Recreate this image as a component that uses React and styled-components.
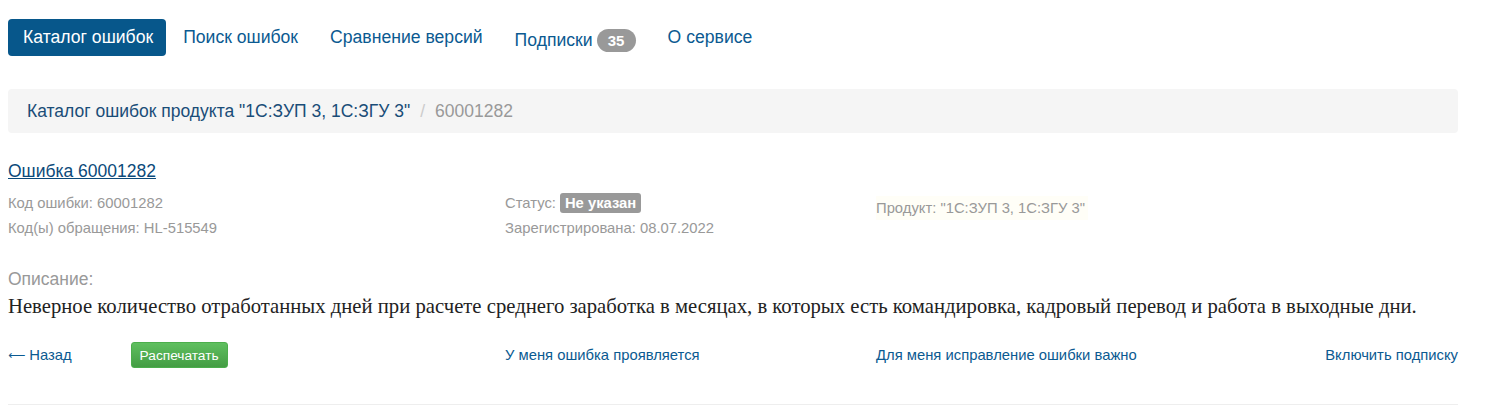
import React from "react";
import styled, { createGlobalStyle } from "styled-components";

const GlobalStyle = createGlobalStyle`
  body {
    margin: 0;
    background: #fff;
    font-family: "Liberation Sans", Arial, sans-serif;
    color: #333;
  }
  * { box-sizing: border-box; }
`;

const tabs = [
  { title: "Каталог ошибок", active: true },
  { title: "Поиск ошибок" },
  { title: "Сравнение версий" },
  { title: "Подписки", badge: 35 },
  { title: "О сервисе" },
];

const App = () => {
  return (
    <>
      <GlobalStyle />
      <Page>
        <Nav>
          {tabs.map((t) => (
            <Tab key={t.title} $active={t.active} $badge={!!t.badge}>
              {t.title}
              {t.badge && <Badge>{t.badge}</Badge>}
            </Tab>
          ))}
        </Nav>

        <Breadcrumb>
          <Crumb>Каталог ошибок продукта "1С:ЗУП 3, 1С:ЗГУ 3"</Crumb>
          <Sep>/</Sep>
          <Current>60001282</Current>
        </Breadcrumb>

        <ErrorTitle>Ошибка 60001282</ErrorTitle>

        <Info>
          <Col>
            <Field>Код ошибки: 60001282</Field>
            <Field>Код(ы) обращения: HL-515549</Field>
          </Col>
          <Col>
            <Field>
              Статус: <Label>Не указан</Label>
            </Field>
            <Field>Зарегистрирована: 08.07.2022</Field>
          </Col>
          <Col>
            <Product>Продукт: "1С:ЗУП 3, 1С:ЗГУ 3"</Product>
          </Col>
        </Info>

        <DescCaption>Описание:</DescCaption>
        <Description>
          Неверное количество отработанных дней при расчете среднего заработка в
          месяцах, в которых есть командировка, кадровый перевод и работа в
          выходные дни.
        </Description>

        <Actions>
          <ActionCell>
            <Link>
              <Arrow>⟵</Arrow>Назад
            </Link>
            <PrintBtn>Распечатать</PrintBtn>
          </ActionCell>
          <ActionCell>
            <Link>У меня ошибка проявляется</Link>
          </ActionCell>
          <ActionCell>
            <Link>Для меня исправление ошибки важно</Link>
            <Link>Включить подписку</Link>
          </ActionCell>
        </Actions>

        <Divider />
      </Page>
    </>
  );
};

const Page = styled.div`
  width: 1450px;
  margin-left: 8px;
  padding-top: 19px;
`;

const Nav = styled.ul`
  display: flex;
  align-items: center;
  margin: 0;
  padding: 0;
  list-style: none;
  gap: 2px;
`;

const Tab = styled.li`
  display: flex;
  align-items: center;
  height: 37px;
  padding: ${({ $active }) => ($active ? "0 13px 0 15px" : "0 15px")};
  padding-top: ${({ $badge }) => ($badge ? "5px" : "0")};
  border-radius: 4px;
  font-size: 17.6px;
  color: ${({ $active }) => ($active ? "#fff" : "#0b5a91")};
  background: ${({ $active }) => ($active ? "#07578b" : "transparent")};
  cursor: pointer;
`;

const Badge = styled.span`
  display: inline-flex;
  align-items: center;
  justify-content: center;
  height: 23px;
  min-width: 39px;
  margin-left: 4px;
  padding: 0 8px;
  border-radius: 12px;
  background: #999;
  color: #fff;
  font-size: 15px;
  font-weight: 700;
`;

const Breadcrumb = styled.div`
  display: flex;
  align-items: center;
  height: 44px;
  margin-top: 33px;
  padding: 0 19px;
  background: #f5f5f5;
  border-radius: 4px;
  font-size: 17.5px;
`;

const Crumb = styled.span`
  color: #1a4d78;
`;

const Sep = styled.span`
  padding: 0 10px;
  color: #ccc;
`;

const Current = styled.span`
  color: #999;
`;

const ErrorTitle = styled.a`
  display: inline-block;
  margin-top: 28px;
  font-size: 17.5px;
  line-height: 20px;
  color: #0b4a7a;
  text-decoration: underline;
`;

const Info = styled.div`
  display: grid;
  grid-template-columns: 497px 371px 1fr;
  margin-top: 12px;
`;

const Col = styled.div`
  display: flex;
  flex-direction: column;
  gap: 5px;
`;

const Field = styled.div`
  display: flex;
  align-items: center;
  height: 20px;
  font-size: 14.8px;
  color: #999;
  gap: 4px;
`;

const Label = styled.span`
  display: inline-flex;
  align-items: center;
  height: 20px;
  padding: 0 5px;
  border-radius: 3px;
  background: #999;
  color: #fff;
  font-weight: 700;
  font-size: 14.8px;
`;

const Product = styled.div`
  display: inline-flex;
  align-self: flex-start;
  align-items: center;
  height: 24px;
  margin-top: 3px;
  padding-right: 3px;
  background: #fffef7;
  font-size: 14.8px;
  color: #999;
`;

const DescCaption = styled.div`
  margin-top: 31px;
  font-size: 17.5px;
  line-height: 20px;
  color: #999;
`;

const Description = styled.p`
  margin: 5px 0 0;
  font-family: "Liberation Serif", "Times New Roman", serif;
  font-size: 20.7px;
  line-height: 24px;
  color: #222;
`;

const Actions = styled.div`
  display: grid;
  grid-template-columns: 497px 371px 1fr;
  margin-top: 24px;
  align-items: center;
`;

const ActionCell = styled.div`
  display: flex;
  align-items: center;
  justify-content: space-between;
  &:first-child {
    justify-content: flex-start;
    gap: 59px;
  }
`;

const Link = styled.a`
  display: inline-flex;
  align-items: center;
  font-size: 14.8px;
  color: #0b5a91;
  cursor: pointer;
`;

const Arrow = styled.span`
  margin-right: 4px;
  font-family: "DejaVu Sans", sans-serif;
  font-size: 12px;
  line-height: 1;
`;

const PrintBtn = styled.button`
  height: 26px;
  padding: 0 8px;
  border: 1px solid #4cae4c;
  border-radius: 3px;
  background: linear-gradient(#5fbf5f, #449d44);
  color: #fff;
  font-family: inherit;
  font-size: 13.7px;
`;

const Divider = styled.hr`
  margin: 36px 0 0;
  border: 0;
  border-top: 1px solid #eee;
`;

export default App;
